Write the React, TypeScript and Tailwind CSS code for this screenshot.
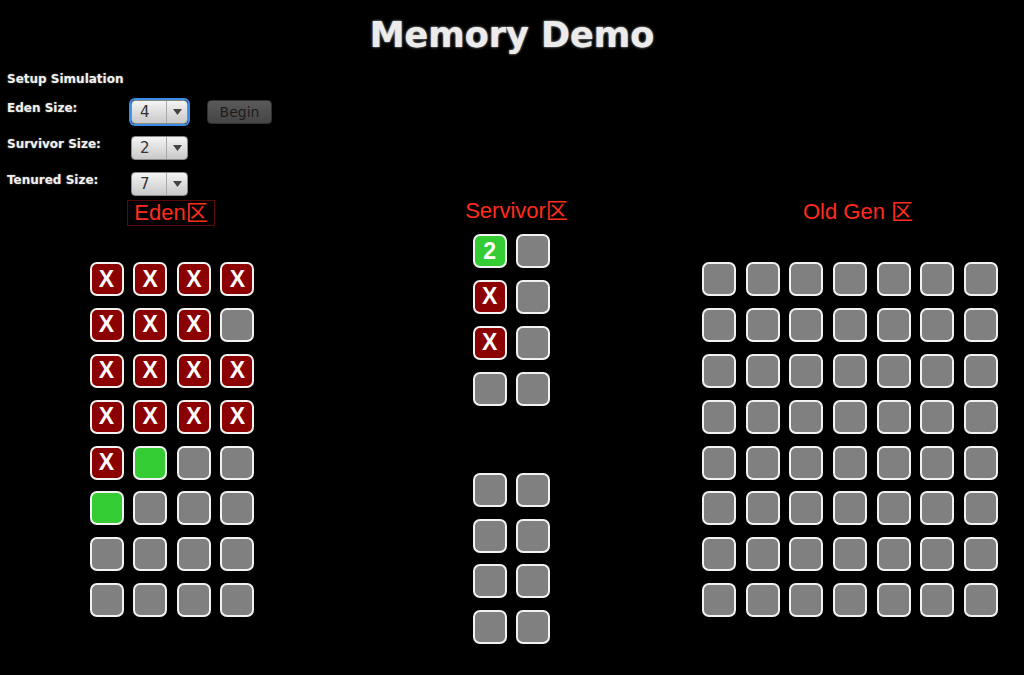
import React from 'react';

type C = 'g' | 'x' | 'n' | '2';

function Cell({ t }: { t: C }) {
  const bg =
    t === 'x' ? 'bg-[#8b0000]' : t === 'n' || t === '2' ? 'bg-[#33cc33]' : 'bg-[#808080]';
  return (
    <div
      className={`w-[34px] h-[34px] rounded-[7px] border-2 border-[#f2f2f2] ${bg} flex items-center justify-center text-white font-bold text-[23px] leading-none`}
      style={{ fontFamily: '"Liberation Sans", Arial, sans-serif' }}
    >
      {t === 'x' ? 'X' : t === '2' ? '2' : null}
    </div>
  );
}

function Combo({ v, focus }: { v: string; focus?: boolean }) {
  return (
    <div
      className={`w-[57px] h-[24px] rounded-[4px] border border-[#8a8a8a] bg-gradient-to-b from-[#f4f4f4] to-[#c9c9c9] flex items-stretch ${
        focus ? 'ring-2 ring-[#3b8ee6]' : ''
      }`}
    >
      <div className="flex-1 pl-[8px] flex items-center text-[15px] text-[#333]" style={{ fontFamily: '"DejaVu Sans", sans-serif' }}>
        {v}
      </div>
      <div className="w-[21px] border-l border-[#a8a8a8] flex items-center justify-center">
        <svg width="9" height="6" viewBox="0 0 9 6">
          <path d="M0 0 L9 0 L4.5 6 Z" fill="#444" />
        </svg>
      </div>
    </div>
  );
}

const eden: C[][] = [
  ['x', 'x', 'x', 'x'],
  ['x', 'x', 'x', 'g'],
  ['x', 'x', 'x', 'x'],
  ['x', 'x', 'x', 'x'],
  ['x', 'n', 'g', 'g'],
  ['n', 'g', 'g', 'g'],
  ['g', 'g', 'g', 'g'],
  ['g', 'g', 'g', 'g'],
];

const survTop: C[][] = [
  ['2', 'g'],
  ['x', 'g'],
  ['x', 'g'],
  ['g', 'g'],
];
const survBot: C[][] = [
  ['g', 'g'],
  ['g', 'g'],
  ['g', 'g'],
  ['g', 'g'],
];

const old: C[][] = Array.from({ length: 8 }, () => Array.from({ length: 7 }, () => 'g' as C));

function Grid({ rows, cols }: { rows: C[][]; cols: string }) {
  return (
    <div className={`grid ${cols} gap-x-[9.67px] gap-y-[11.9px]`}>
      {rows.flat().map((t, i) => (
        <Cell key={i} t={t} />
      ))}
    </div>
  );
}

const labelCls =
  'w-[124px] h-[16px] leading-[16px] text-[12px] font-bold text-[#f0f0f0] [text-shadow:0_0_2px_#666]';

export default function App() {
  const dv = { fontFamily: '"DejaVu Sans", Verdana, sans-serif' };
  const lib = { fontFamily: '"Liberation Sans", Arial, "Noto Sans CJK SC", sans-serif' };
  return (
    <div className="w-[1024px] h-[675px] bg-black overflow-hidden" style={dv}>
      <div className="h-[66px] pt-[14px] flex justify-center">
        <div className="text-[35px] leading-[42px] font-bold text-[#ececec] [text-shadow:0_0_3px_#9a9a9a,0_0_1px_#bbb]">
          Memory Demo
        </div>
      </div>
      <div className="pl-[7px]">
        <div className="h-[27px] leading-[27px] text-[12px] font-bold text-[#f0f0f0] [text-shadow:0_0_2px_#666]">
          Setup Simulation
        </div>
        <div className="mt-[7px] flex flex-col gap-[12px]">
          <div className="flex items-start h-[24px]">
            <div className={labelCls}>Eden Size:</div>
            <Combo v="4" focus />
            <div className="ml-[19px] w-[65px] h-[24px] rounded-[4px] border border-[#303030] bg-gradient-to-b from-[#5a5a5a] to-[#454545] flex items-center justify-center text-[14px] text-[#1c1c1c]">
              Begin
            </div>
          </div>
          <div className="flex items-start h-[24px]">
            <div className={labelCls}>Survivor Size:</div>
            <Combo v="2" />
          </div>
          <div className="flex items-start h-[24px]">
            <div className={labelCls}>Tenured Size:</div>
            <Combo v="7" />
          </div>
        </div>
      </div>
      <div className="flex mt-[4px]" style={lib}>
        <div className="w-[344px] flex flex-col items-center">
          <div className="mr-[2px] h-[26px] px-[6px] border border-[#5a0808] text-[22px] leading-[24px] text-[#ff2b1c]">
            Eden区
          </div>
          <div className="mt-[36px]">
            <Grid rows={eden} cols="grid-cols-4" />
          </div>
        </div>
        <div className="w-[335px] flex flex-col items-center">
          <div className="ml-[10px] -mt-[2px] h-[26px] border border-transparent text-[22px] leading-[24px] text-[#ff2b1c]">
            Servivor区
          </div>
          <div className="mt-[10px]">
            <Grid rows={survTop} cols="grid-cols-2" />
          </div>
          <div className="mt-[67px]">
            <Grid rows={survBot} cols="grid-cols-2" />
          </div>
        </div>
        <div className="w-[342px] flex flex-col items-center">
          <div className="ml-[16px] -mt-[1px] h-[26px] border border-transparent text-[22px] leading-[24px] text-[#ff2b1c]">
            Old Gen 区
          </div>
          <div className="mt-[37px]">
            <Grid rows={old} cols="grid-cols-7" />
          </div>
        </div>
      </div>
    </div>
  );
}
